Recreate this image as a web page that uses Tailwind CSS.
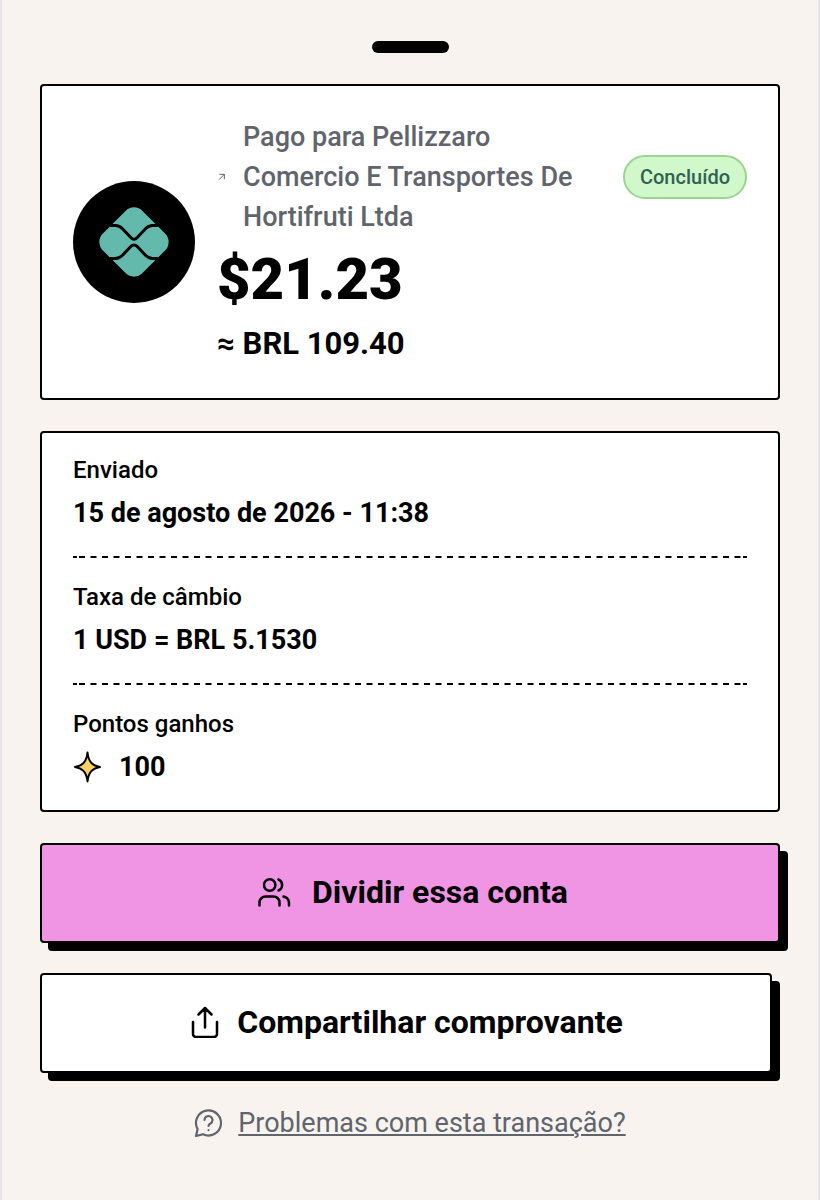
<!DOCTYPE html>
<html lang="pt-BR">
  <head>
    <meta charset="UTF-8" />
    <meta name="viewport" content="width=device-width, initial-scale=1.0" />
    <title>Comprovante</title>
    <script src="https://cdn.jsdelivr.net/npm/@tailwindcss/browser@4"></script>
  </head>
  <body class="bg-[#f8f3ef] text-black font-[Roboto,sans-serif]">
    <main class="min-h-screen border-x-2 border-[#e6e4e9] px-[38px] pt-[41px] pb-10">
      <!-- drawer handle -->
      <div class="mx-auto h-3 w-[77px] rounded-full bg-black"></div>

      <!-- payment summary -->
      <section class="mt-[31px] flex items-center gap-[22px] rounded-sm border-2 border-black bg-white px-[31px] py-[31px]">
        <svg class="size-[122px] shrink-0" viewBox="0 0 122 122">
          <circle cx="61" cy="61" r="61" fill="#000" />
          <rect x="33" y="33" width="56" height="56" rx="12" fill="#63b9ac" transform="rotate(45 61 61)" />
          <path d="M37 44.500h5.500c3 0 5 1.200 7 3.200l8.500 9c1.800 1.900 4.200 1.900 6 0l8.500-9c2-2 4-3.200 7-3.200H85" fill="none" stroke="#000" stroke-width="3" />
          <path d="M37 77.500h5.500c3 0 5-1.200 7-3.200l8.500-9c1.800-1.900 4.200-1.900 6 0l8.500 9c2 2 4 3.200 7 3.200H85" fill="none" stroke="#000" stroke-width="3" />
        </svg>
        <div class="flex-1 pb-[3px]">
          <div class="flex items-center justify-between gap-8">
            <div class="flex items-center gap-[18px] text-[#5f646d]">
              <svg class="size-2 shrink-0" viewBox="0 0 24 24" fill="none" stroke="currentColor" stroke-width="3">
                <path d="M6 20 22 4M7 4h15v15" />
              </svg>
              <h1 class="text-[27px] leading-10 font-medium">Pago para Pellizzaro Comercio E Transportes De Hortifruti Ltda</h1>
            </div>
            <span class="shrink-0 rounded-full border-2 border-[#9ad58d] bg-[#d0f8cb] px-[15px] py-1 text-xl leading-8 font-medium text-[#316150]">Concluído</span>
          </div>
          <p class="mt-3 text-[58px] leading-[60px] font-black">$21.23</p>
          <p class="mt-[15px] text-[31px] leading-10 font-bold">≈ BRL 109.40</p>
        </div>
      </section>

      <!-- details -->
      <dl class="mt-[31px] rounded-sm border-2 border-black bg-white px-[31px] pt-[21px] pb-[25px]">
        <div>
          <dt class="text-2xl leading-[33px] font-medium">Enviado</dt>
          <dd class="mt-2 text-[27px] leading-9 font-bold">15 de agosto de 2026 - 11:38</dd>
        </div>
        <div class="mt-[25px]">
          <div class="flex h-0.5 gap-0.5" aria-hidden="true">
            <span class="w-1 bg-black"></span>
            <svg class="h-0.5 min-w-0 flex-1">
              <line x1="0" y1="1" x2="100%" y2="1" stroke="#000" stroke-width="2" stroke-dasharray="6 5.500" />
            </svg>
            <span class="w-1 bg-black"></span>
          </div>
          <dt class="mt-[23px] text-2xl leading-[33px] font-medium">Taxa de câmbio</dt>
          <dd class="mt-2 text-[27px] leading-9 font-bold">1 USD = BRL 5.1530</dd>
        </div>
        <div class="mt-[25px]">
          <div class="flex h-0.5 gap-0.5" aria-hidden="true">
            <span class="w-1 bg-black"></span>
            <svg class="h-0.5 min-w-0 flex-1">
              <line x1="0" y1="1" x2="100%" y2="1" stroke="#000" stroke-width="2" stroke-dasharray="6 5.500" />
            </svg>
            <span class="w-1 bg-black"></span>
          </div>
          <dt class="mt-[23px] text-2xl leading-[33px] font-medium">Pontos ganhos</dt>
          <dd class="mt-2 flex items-center gap-[18px] text-[27px] leading-9 font-bold">
            <svg class="h-8 w-7" viewBox="0 0 28 32" fill="#fad264" stroke="#000" stroke-width="2" stroke-linejoin="round">
              <path d="M14.500 1.500c1 9 4.500 13 12.500 14.500-8 1.500-11.500 5.500-12.500 14.500-1-9-4.500-13-12.500-14.500C10 14.500 13.500 10.500 14.500 1.500Z" />
            </svg>
            100
          </dd>
        </div>
      </dl>

      <!-- actions -->
      <button type="button" class="mt-[31px] flex w-full items-center justify-center gap-5 rounded-sm border-2 border-black bg-[#f095e4] pt-[27px] pb-[29px] text-[32px] leading-10 font-bold shadow-[8px_8px_0_#000]">
        <svg class="size-10" viewBox="-6 -4 40 40" fill="none" stroke="currentColor" stroke-width="2.500" stroke-linecap="round" stroke-linejoin="round">
          <circle cx="11.700" cy="9" r="5.700" />
          <path d="M20.500 3.500a6 6 0 0 1 0 11M1.500 29.500v-3a6 6 0 0 1 6-6h8a6 6 0 0 1 6 6v3M25.500 20.500c3.500.8 5.500 3 5.500 6.500v2.500" />
        </svg>
        Dividir essa conta
      </button>
      <div class="mt-[30px] pr-2">
        <button type="button" class="flex w-full items-center justify-center gap-4 rounded-sm border-2 border-black bg-white pt-[27px] pb-[29px] text-[32px] leading-10 font-bold shadow-[8px_8px_0_#000]">
          <svg class="size-8" viewBox="0 0 32 32" fill="none" stroke="currentColor" stroke-width="2.500" stroke-linecap="round" stroke-linejoin="round">
            <path d="M4 16v12a3 3 0 0 0 3 3h18a3 3 0 0 0 3-3V16M16 21.500V2M9.500 8.500 16 2l6.500 6.500" />
          </svg>
          Compartilhar comprovante
        </button>
      </div>
      <div class="mt-[30px] flex justify-center">
        <a href="#" class="flex items-center gap-4 text-[27px] leading-10 text-[#5f646d]">
          <svg class="size-7" viewBox="0 0 28 28" fill="none" stroke="currentColor" stroke-width="2.200" stroke-linecap="round" stroke-linejoin="round">
            <path d="M3.600 20.100A12.500 12.500 0 1 1 9 25.200L2 27Z" />
            <path d="M10.500 11a4 4 0 1 1 6 3.500c-1.500.8-2 1.200-2 2.500M14.500 21v.1" />
          </svg>
          <span class="underline decoration-2 underline-offset-2">Problemas com esta transação?</span>
        </a>
      </div>
    </main>
  </body>
</html>
